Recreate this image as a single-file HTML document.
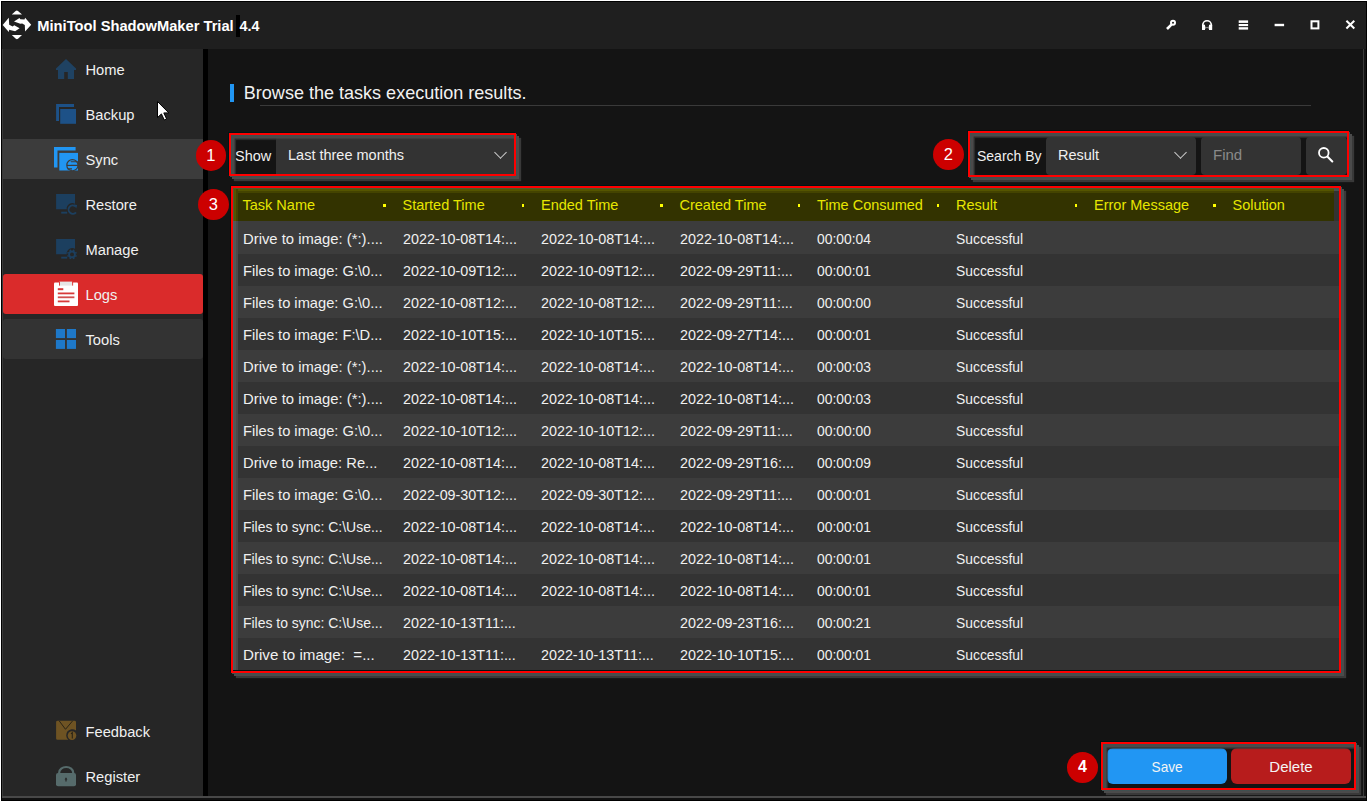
<!DOCTYPE html>
<html><head><meta charset="utf-8">
<style>
*{margin:0;padding:0;box-sizing:border-box}
html,body{width:1368px;height:803px;overflow:hidden;background:#fff;font-family:"Liberation Sans",sans-serif;color:#f0f0f0}
.a{position:absolute}
svg{position:absolute;overflow:visible}
#win{left:1px;top:1px;width:1366px;height:800px;background:#000}
#title{left:2px;top:2px;width:1364px;height:47px;background:#1f1f1f}
#side{left:2px;top:49px;width:201px;height:747px;background:#262626;border-left:1px solid #3a3a3a}
#sep{left:203px;top:49px;width:5px;height:747px;background:#000}
#content{left:208px;top:49px;width:1158px;height:747px;background:#141414}
#rline{left:1363px;top:49px;width:1px;height:747px;background:#3a3a3a}
#bot1{left:2px;top:796px;width:1364px;height:2px;background:#484848}
#bot2{left:2px;top:798px;width:1364px;height:2px;background:#111}
.ttl{left:37.3px;top:16px;font-size:14.7px;font-weight:bold;color:#fff;white-space:nowrap;line-height:20px}
.nav{left:3px;width:200px;height:40px;border-radius:3px}
.navt{left:85.5px;font-size:14.7px;line-height:20px;color:#f0f0f0;white-space:nowrap}
.hdr{left:243.8px;top:82.2px;font-size:18.05px;line-height:22px;color:#f2f2f2;white-space:nowrap}
.badge{width:30.8px;height:30.8px;border-radius:50%;background:#cc0000;color:#fff;font-size:16.5px;line-height:30.8px;text-align:center}
.dot{width:2.5px;height:2.5px;background:#ffff00}
.ann{position:absolute;border:2px solid #f00;box-shadow:-1px -1px 0 0 rgba(0,20,20,.9),1px 1px 0 0 #3f5050,3px 3px 0 0 #4b4b4b,5px 5px 1px 0 #393939}
.inset{position:absolute;pointer-events:none;box-shadow:inset 1px 1px 0 #3f5050,inset 3.6px 3.6px 0 #4a4a4a,inset 5px 5px 1px rgba(56,56,56,.75)}
.dd{position:absolute;background:#333;border-radius:4px}
.chev{position:absolute;width:9px;height:9px;border-right:1.5px solid #cfcfcf;border-bottom:1.5px solid #cfcfcf;transform:rotate(45deg)}
.t{line-height:32px;font-size:14.5px;white-space:nowrap;color:#f0f0f0}
.th{line-height:34px;font-size:14.5px;white-space:nowrap;color:#e6e600}
.btn{position:absolute;border-radius:6px;color:#f4f4f4;font-size:15px;text-align:center;line-height:38px}
</style></head><body>
<div id="win" class="a"></div>
<div id="title" class="a"></div>
<div id="side" class="a"></div>
<div id="sep" class="a"></div>
<div id="content" class="a"></div>
<div id="rline" class="a"></div>
<div id="bot1" class="a"></div>
<div id="bot2" class="a"></div>

<div class="a" style="left:236px;top:15px;width:4px;height:21.6px;background:#000"></div>
<div class="a ttl">MiniTool ShadowMaker Trial</div><div class="a ttl" style="left:239.6px;font-size:14.3px">4.4</div>

<div class="a nav" style="top:139px;background:#3c3c3c;border-radius:0"></div>
<div class="a nav" style="top:274px;background:#da2b2b"></div>
<div class="a nav" style="top:319px;background:#333"></div>
<div class="a navt" style="top:59.5px">Home</div>
<div class="a navt" style="top:104.5px">Backup</div>
<div class="a navt" style="top:149.5px">Sync</div>
<div class="a navt" style="top:194.5px">Restore</div>
<div class="a navt" style="top:239.5px">Manage</div>
<div class="a navt" style="top:284.5px">Logs</div>
<div class="a navt" style="top:329.5px">Tools</div>
<div class="a navt" style="top:721.5px">Feedback</div>
<div class="a navt" style="top:766.5px">Register</div>

<div class="a" style="left:230px;top:84px;width:4px;height:18px;background:#2196f3"></div>
<div class="a hdr">Browse the tasks execution results.</div>
<div class="a" style="left:260px;top:105px;width:1051px;height:1px;background:#3a3a3a"></div>

<!-- box 1 -->
<div class="ann" style="left:229px;top:133px;width:287px;height:43px;background:#141414"></div>
<div class="dd" style="left:276px;top:135px;width:238px;height:39px;border-radius:5px 0 0 0"></div>
<div class="a" style="left:235px;top:141px;font-size:14.5px;line-height:30px;color:#f0f0f0">Show</div>
<div class="a" style="left:288px;top:140px;font-size:14.5px;line-height:30px;color:#f0f0f0">Last three months</div>
<div class="chev" style="left:495.5px;top:147.5px"></div>
<div class="inset" style="left:231px;top:135px;width:283px;height:39px"></div>

<!-- box 2 -->
<div class="ann" style="left:968px;top:131px;width:381px;height:46px;background:#141414"></div>
<div class="dd" style="left:1046px;top:137px;width:150px;height:38px"></div>
<div class="dd" style="left:1201px;top:137px;width:100px;height:38px"></div>
<div class="dd" style="left:1306px;top:137px;width:41px;height:38px"></div>
<div class="a" style="left:977px;top:140.5px;font-size:14px;line-height:30px;color:#f0f0f0">Search By</div>
<div class="a" style="left:1058px;top:140px;font-size:14.5px;line-height:30px;color:#f0f0f0">Result</div>
<div class="chev" style="left:1175.5px;top:148.3px"></div>
<div class="a" style="left:1213px;top:140px;font-size:15px;line-height:30px;color:#8a8a8a">Find</div>
<div class="inset" style="left:970px;top:133px;width:377px;height:42px"></div>

<!-- box 3 -->
<div class="ann" style="left:231px;top:186px;width:1110px;height:487px;background:#001414"></div>
<div class="a" style="left:233px;top:188px;width:1101px;height:33px;background:#333300"></div>
<div class="a" style="left:233px;top:188px;width:1101px;height:5px;background:#444400"></div>
<div class="a" style="left:233px;top:188px;width:1101px;height:3px;background:#555500"></div>
<div class="a" style="left:233px;top:188px;width:5px;height:33px;background:#444400"></div>
<div class="a" style="left:233px;top:188px;width:3px;height:33px;background:#555500"></div>
<div class="a" style="left:1334px;top:188px;width:5px;height:33px;background:#333"></div>
<div class="a" style="left:1334px;top:188px;width:5px;height:3px;background:#4a5050"></div>
<div class="a" style="left:233px;top:221px;width:1106px;height:33px;background:#3c3c3c"></div>
<div class="a" style="left:233px;top:254px;width:1106px;height:32px;background:#333333"></div>
<div class="a" style="left:233px;top:286px;width:1106px;height:32px;background:#3c3c3c"></div>
<div class="a" style="left:233px;top:318px;width:1106px;height:32px;background:#333333"></div>
<div class="a" style="left:233px;top:350px;width:1106px;height:32px;background:#3c3c3c"></div>
<div class="a" style="left:233px;top:382px;width:1106px;height:32px;background:#333333"></div>
<div class="a" style="left:233px;top:414px;width:1106px;height:32px;background:#3c3c3c"></div>
<div class="a" style="left:233px;top:446px;width:1106px;height:32px;background:#333333"></div>
<div class="a" style="left:233px;top:478px;width:1106px;height:32px;background:#3c3c3c"></div>
<div class="a" style="left:233px;top:510px;width:1106px;height:32px;background:#333333"></div>
<div class="a" style="left:233px;top:542px;width:1106px;height:32px;background:#3c3c3c"></div>
<div class="a" style="left:233px;top:574px;width:1106px;height:32px;background:#333333"></div>
<div class="a" style="left:233px;top:606px;width:1106px;height:32px;background:#3c3c3c"></div>
<div class="a" style="left:233px;top:638px;width:1106px;height:32px;background:#333333"></div>
<div class="a t" style="left:242.5px;top:223px;transform:scaleX(1.022);transform-origin:0 0">Drive to image: (*:)....</div>
<div class="a t" style="left:402.5px;top:223px;transform:scaleX(0.988);transform-origin:0 0">2022-10-08T14:...</div>
<div class="a t" style="left:541px;top:223px;transform:scaleX(0.988);transform-origin:0 0">2022-10-08T14:...</div>
<div class="a t" style="left:679.5px;top:223px;transform:scaleX(0.988);transform-origin:0 0">2022-10-08T14:...</div>
<div class="a t" style="left:817px;top:223px;transform:scaleX(0.955);transform-origin:0 0">00:00:04</div>
<div class="a t" style="left:956px;top:223px;transform:scaleX(0.957);transform-origin:0 0">Successful</div>
<div class="a t" style="left:242.5px;top:255px;transform:scaleX(1.012);transform-origin:0 0">Files to image: G:\0...</div>
<div class="a t" style="left:402.5px;top:255px;transform:scaleX(0.988);transform-origin:0 0">2022-10-09T12:...</div>
<div class="a t" style="left:541px;top:255px;transform:scaleX(0.988);transform-origin:0 0">2022-10-09T12:...</div>
<div class="a t" style="left:679.5px;top:255px;transform:scaleX(0.988);transform-origin:0 0">2022-09-29T11:...</div>
<div class="a t" style="left:817px;top:255px;transform:scaleX(0.955);transform-origin:0 0">00:00:01</div>
<div class="a t" style="left:956px;top:255px;transform:scaleX(0.957);transform-origin:0 0">Successful</div>
<div class="a t" style="left:242.5px;top:287px;transform:scaleX(1.012);transform-origin:0 0">Files to image: G:\0...</div>
<div class="a t" style="left:402.5px;top:287px;transform:scaleX(0.988);transform-origin:0 0">2022-10-08T12:...</div>
<div class="a t" style="left:541px;top:287px;transform:scaleX(0.988);transform-origin:0 0">2022-10-08T12:...</div>
<div class="a t" style="left:679.5px;top:287px;transform:scaleX(0.988);transform-origin:0 0">2022-09-29T11:...</div>
<div class="a t" style="left:817px;top:287px;transform:scaleX(0.955);transform-origin:0 0">00:00:00</div>
<div class="a t" style="left:956px;top:287px;transform:scaleX(0.957);transform-origin:0 0">Successful</div>
<div class="a t" style="left:242.5px;top:319px;transform:scaleX(1.012);transform-origin:0 0">Files to image: F:\D...</div>
<div class="a t" style="left:402.5px;top:319px;transform:scaleX(0.988);transform-origin:0 0">2022-10-10T15:...</div>
<div class="a t" style="left:541px;top:319px;transform:scaleX(0.988);transform-origin:0 0">2022-10-10T15:...</div>
<div class="a t" style="left:679.5px;top:319px;transform:scaleX(0.988);transform-origin:0 0">2022-09-27T14:...</div>
<div class="a t" style="left:817px;top:319px;transform:scaleX(0.955);transform-origin:0 0">00:00:01</div>
<div class="a t" style="left:956px;top:319px;transform:scaleX(0.957);transform-origin:0 0">Successful</div>
<div class="a t" style="left:242.5px;top:351px;transform:scaleX(1.022);transform-origin:0 0">Drive to image: (*:)....</div>
<div class="a t" style="left:402.5px;top:351px;transform:scaleX(0.988);transform-origin:0 0">2022-10-08T14:...</div>
<div class="a t" style="left:541px;top:351px;transform:scaleX(0.988);transform-origin:0 0">2022-10-08T14:...</div>
<div class="a t" style="left:679.5px;top:351px;transform:scaleX(0.988);transform-origin:0 0">2022-10-08T14:...</div>
<div class="a t" style="left:817px;top:351px;transform:scaleX(0.955);transform-origin:0 0">00:00:03</div>
<div class="a t" style="left:956px;top:351px;transform:scaleX(0.957);transform-origin:0 0">Successful</div>
<div class="a t" style="left:242.5px;top:383px;transform:scaleX(1.022);transform-origin:0 0">Drive to image: (*:)....</div>
<div class="a t" style="left:402.5px;top:383px;transform:scaleX(0.988);transform-origin:0 0">2022-10-08T14:...</div>
<div class="a t" style="left:541px;top:383px;transform:scaleX(0.988);transform-origin:0 0">2022-10-08T14:...</div>
<div class="a t" style="left:679.5px;top:383px;transform:scaleX(0.988);transform-origin:0 0">2022-10-08T14:...</div>
<div class="a t" style="left:817px;top:383px;transform:scaleX(0.955);transform-origin:0 0">00:00:03</div>
<div class="a t" style="left:956px;top:383px;transform:scaleX(0.957);transform-origin:0 0">Successful</div>
<div class="a t" style="left:242.5px;top:415px;transform:scaleX(1.012);transform-origin:0 0">Files to image: G:\0...</div>
<div class="a t" style="left:402.5px;top:415px;transform:scaleX(0.988);transform-origin:0 0">2022-10-10T12:...</div>
<div class="a t" style="left:541px;top:415px;transform:scaleX(0.988);transform-origin:0 0">2022-10-10T12:...</div>
<div class="a t" style="left:679.5px;top:415px;transform:scaleX(0.988);transform-origin:0 0">2022-09-29T11:...</div>
<div class="a t" style="left:817px;top:415px;transform:scaleX(0.955);transform-origin:0 0">00:00:00</div>
<div class="a t" style="left:956px;top:415px;transform:scaleX(0.957);transform-origin:0 0">Successful</div>
<div class="a t" style="left:242.5px;top:447px;transform:scaleX(1.017);transform-origin:0 0">Drive to image: Re...</div>
<div class="a t" style="left:402.5px;top:447px;transform:scaleX(0.988);transform-origin:0 0">2022-10-08T14:...</div>
<div class="a t" style="left:541px;top:447px;transform:scaleX(0.988);transform-origin:0 0">2022-10-08T14:...</div>
<div class="a t" style="left:679.5px;top:447px;transform:scaleX(0.988);transform-origin:0 0">2022-09-29T16:...</div>
<div class="a t" style="left:817px;top:447px;transform:scaleX(0.955);transform-origin:0 0">00:00:09</div>
<div class="a t" style="left:956px;top:447px;transform:scaleX(0.957);transform-origin:0 0">Successful</div>
<div class="a t" style="left:242.5px;top:479px;transform:scaleX(1.012);transform-origin:0 0">Files to image: G:\0...</div>
<div class="a t" style="left:402.5px;top:479px;transform:scaleX(0.988);transform-origin:0 0">2022-09-30T12:...</div>
<div class="a t" style="left:541px;top:479px;transform:scaleX(0.988);transform-origin:0 0">2022-09-30T12:...</div>
<div class="a t" style="left:679.5px;top:479px;transform:scaleX(0.988);transform-origin:0 0">2022-09-29T11:...</div>
<div class="a t" style="left:817px;top:479px;transform:scaleX(0.955);transform-origin:0 0">00:00:01</div>
<div class="a t" style="left:956px;top:479px;transform:scaleX(0.957);transform-origin:0 0">Successful</div>
<div class="a t" style="left:242.5px;top:511px;transform:scaleX(0.962);transform-origin:0 0">Files to sync: C:\Use...</div>
<div class="a t" style="left:402.5px;top:511px;transform:scaleX(0.988);transform-origin:0 0">2022-10-08T14:...</div>
<div class="a t" style="left:541px;top:511px;transform:scaleX(0.988);transform-origin:0 0">2022-10-08T14:...</div>
<div class="a t" style="left:679.5px;top:511px;transform:scaleX(0.988);transform-origin:0 0">2022-10-08T14:...</div>
<div class="a t" style="left:817px;top:511px;transform:scaleX(0.955);transform-origin:0 0">00:00:01</div>
<div class="a t" style="left:956px;top:511px;transform:scaleX(0.957);transform-origin:0 0">Successful</div>
<div class="a t" style="left:242.5px;top:543px;transform:scaleX(0.962);transform-origin:0 0">Files to sync: C:\Use...</div>
<div class="a t" style="left:402.5px;top:543px;transform:scaleX(0.988);transform-origin:0 0">2022-10-08T14:...</div>
<div class="a t" style="left:541px;top:543px;transform:scaleX(0.988);transform-origin:0 0">2022-10-08T14:...</div>
<div class="a t" style="left:679.5px;top:543px;transform:scaleX(0.988);transform-origin:0 0">2022-10-08T14:...</div>
<div class="a t" style="left:817px;top:543px;transform:scaleX(0.955);transform-origin:0 0">00:00:01</div>
<div class="a t" style="left:956px;top:543px;transform:scaleX(0.957);transform-origin:0 0">Successful</div>
<div class="a t" style="left:242.5px;top:575px;transform:scaleX(0.962);transform-origin:0 0">Files to sync: C:\Use...</div>
<div class="a t" style="left:402.5px;top:575px;transform:scaleX(0.988);transform-origin:0 0">2022-10-08T14:...</div>
<div class="a t" style="left:541px;top:575px;transform:scaleX(0.988);transform-origin:0 0">2022-10-08T14:...</div>
<div class="a t" style="left:679.5px;top:575px;transform:scaleX(0.988);transform-origin:0 0">2022-10-08T14:...</div>
<div class="a t" style="left:817px;top:575px;transform:scaleX(0.955);transform-origin:0 0">00:00:01</div>
<div class="a t" style="left:956px;top:575px;transform:scaleX(0.957);transform-origin:0 0">Successful</div>
<div class="a t" style="left:242.5px;top:607px;transform:scaleX(0.962);transform-origin:0 0">Files to sync: C:\Use...</div>
<div class="a t" style="left:402.5px;top:607px;transform:scaleX(0.988);transform-origin:0 0">2022-10-13T11:...</div>
<div class="a t" style="left:679.5px;top:607px;transform:scaleX(0.988);transform-origin:0 0">2022-09-23T16:...</div>
<div class="a t" style="left:817px;top:607px;transform:scaleX(0.955);transform-origin:0 0">00:00:21</div>
<div class="a t" style="left:956px;top:607px;transform:scaleX(0.957);transform-origin:0 0">Successful</div>
<div class="a t" style="left:242.5px;top:639px;transform:scaleX(1.045);transform-origin:0 0">Drive to image: &nbsp;=...</div>
<div class="a t" style="left:402.5px;top:639px;transform:scaleX(0.988);transform-origin:0 0">2022-10-13T11:...</div>
<div class="a t" style="left:541px;top:639px;transform:scaleX(0.988);transform-origin:0 0">2022-10-13T11:...</div>
<div class="a t" style="left:679.5px;top:639px;transform:scaleX(0.988);transform-origin:0 0">2022-10-10T15:...</div>
<div class="a t" style="left:817px;top:639px;transform:scaleX(0.955);transform-origin:0 0">00:00:01</div>
<div class="a t" style="left:956px;top:639px;transform:scaleX(0.957);transform-origin:0 0">Successful</div>
<div class="a th" style="left:242.5px;top:188px">Task Name</div>
<div class="a th" style="left:402.5px;top:188px">Started Time</div>
<div class="a th" style="left:541px;top:188px">Ended Time</div>
<div class="a th" style="left:679.5px;top:188px">Created Time</div>
<div class="a th" style="left:817px;top:188px">Time Consumed</div>
<div class="a th" style="left:956px;top:188px">Result</div>
<div class="a th" style="left:1094px;top:188px">Error Message</div>
<div class="a th" style="left:1232.5px;top:188px">Solution</div>
<div class="a dot" style="left:383.0px;top:204px"></div>
<div class="a dot" style="left:521.5px;top:204px"></div>
<div class="a dot" style="left:660.0px;top:204px"></div>
<div class="a dot" style="left:797.5px;top:204px"></div>
<div class="a dot" style="left:936.5px;top:204px"></div>
<div class="a dot" style="left:1074.5px;top:204px"></div>
<div class="a dot" style="left:1213.0px;top:204px"></div>
<div class="a" style="left:233px;top:221px;width:5px;height:449px;background:#4a4a4a"></div>
<div class="a" style="left:233px;top:221px;width:3px;height:449px;background:#555"></div>
<div class="a" style="left:233px;top:221px;width:1px;height:449px;background:#4f5f5f"></div>
<div class="a" style="left:233px;top:188px;width:1px;height:33px;background:#4a5a30"></div>
<div class="a" style="left:233px;top:188px;width:1101px;height:1px;background:#4a5a30"></div>

<!-- box 4 -->
<div class="ann" style="left:1101px;top:742px;width:255px;height:48px;background:#141414"></div>
<div class="btn" style="left:1107px;top:748px;width:120px;height:36px;background:#2196f3"><span style="display:inline-block;transform:scaleX(0.91)">Save</span></div>
<div class="btn" style="left:1231px;top:748px;width:120px;height:36px;background:#b71c1c">Delete</div>
<div class="inset" style="left:1103px;top:744px;width:251px;height:44px"></div>

<div class="a badge" style="left:195.5px;top:140px">1</div>
<div class="a badge" style="left:933px;top:139px">2</div>
<div class="a badge" style="left:198px;top:189px">3</div>
<div class="a badge" style="left:1067px;top:752px;font-weight:bold;font-size:16px">4</div>

<!-- logo -->
<svg class="a" style="left:0;top:0" width="40" height="48" viewBox="0 0 40 48">
 <g fill="#fff">
  <path d="M11.8,14.6 L15.6,10.9 Q16.8,10 18,10.9 L22,14.6 Z"/>
  <path d="M11.8,35 L22,35 L18,38.7 Q16.9,39.6 15.8,38.7 Z"/>
  <path d="M2.7,25 L8.8,17.8 L9.2,24.7 L12.7,26.4 L14.2,25.2 L19.6,28.2 L15.1,31.3 L11,30.3 L9.2,29.8 L8.8,32 Z"/>
  <path d="M31.2,24.7 L25.1,17.8 L24.5,19.6 L20.3,19.2 L19.5,18.1 L14,21.5 L20.3,23.8 L22.2,23.4 L24.8,25 L25.1,31.5 Z"/>
 </g>
</svg>
<!-- titlebar right icons -->
<svg class="a" style="left:0;top:0" width="1368" height="48">
 <g stroke="#fff" fill="none">
  <circle cx="1173" cy="22.7" r="2" stroke-width="2"/>
  <path d="M1171.4,24.6 L1167,29" stroke-width="2.6"/>
  <path d="M1202.8,25.5 L1202.8,25 A4.25,4.25 0 0 1 1211.3,25 L1211.3,25.5" stroke-width="1.7"/>
 </g>
 <g fill="#fff">
  <path d="M1202,24.7 L1205,24.7 L1205,30 L1202.6,30 Q1202,30 1202,29.4 Z"/>
  <path d="M1209,24.7 L1212.2,24.7 L1212.2,29.4 Q1212.2,30 1211.6,30 L1209,30 Z"/>
  <path d="M1205.2,26.2 L1207,27.6 L1208.7,26.2 L1208.7,29 L1207,27.6 L1205.2,29 Z" fill="#aaa"/>
  <rect x="1238.7" y="20.4" width="9.4" height="2.5"/>
  <rect x="1238.7" y="24" width="9.4" height="2.1"/>
  <rect x="1238.7" y="27.2" width="9.4" height="2.4"/>
  <rect x="1274.6" y="23.8" width="9.5" height="2.4"/>
 </g>
 <g stroke="#fff" fill="none" stroke-width="2">
  <rect x="1311.5" y="21.3" width="6.9" height="7.1"/>
  <path d="M1346.4,20.7 L1354.3,28.5 M1354.3,20.7 L1346.4,28.5"/>
 </g>
</svg>

<!-- sidebar icons -->
<svg class="a" style="left:0;top:0" width="210" height="803">
 <path fill="#1f4262" d="M56,68.6 L66,59 L76,68.6 L76,70 L74,70 L74,79 L67.8,79 L67.8,72 L64.2,72 L64.2,79 L58,79 L58,70 L56,70 Z"/>
 <g fill="#1d5187">
  <path d="M56.1,104.1 L74,104.1 L74,107 L59,107 L59,121.1 L56.1,121.1 Z"/>
  <rect x="60.2" y="109" width="15.8" height="14.8"/>
 </g>
 <g fill="#2196f3">
  <path d="M54,147 L75.6,147 L75.6,150.5 L57.5,150.5 L57.5,167.5 L54,167.5 Z"/>
  <rect x="59.3" y="152.9" width="18.7" height="17.6"/>
  <circle cx="72.4" cy="165.2" r="5.6" stroke="#3c3c3c" stroke-width="1.2"/>
  <path d="M70.6,161.7 L78.2,161.7 M67,165.4 L78.2,165.4 M67.6,168.9 L72,168.9" stroke="#3c3c3c" stroke-width="1.1" fill="none"/>
  <path d="M68,164.6 L70.6,161.2 L70.6,164.6 Z" fill="#2196f3"/>
 </g>
 <g fill="#1c3f5f">
  <path d="M56.1,193.9 L75,193.9 L75,203.8 A5.6,5.6 0 0 0 66.7,209.2 L56.1,209.2 Z"/>
  <rect x="61.2" y="211.7" width="6" height="1.9"/>
  <path d="M75.4,206.3 A4.2,4.2 0 1 0 76,212.3" fill="none" stroke="#1c3f5f" stroke-width="1.9"/>
  <path d="M73.8,204.5 L77.2,205 L76.2,208.4 Z"/>
 </g>
 <g fill="#1c3f5f">
  <path d="M56.1,238.9 L75,238.9 L75,248.8 A5.6,5.6 0 0 0 66.7,254.2 L56.1,254.2 Z"/>
  <rect x="61.2" y="256.7" width="6" height="1.9"/>
  <circle cx="72" cy="254.4" r="2.9" fill="none" stroke="#1c3f5f" stroke-width="1.9"/>
  <path d="M75.33,255.78 L76.62,256.31 M73.38,257.73 L73.91,259.02 M70.62,257.73 L70.09,259.02 M68.67,255.78 L67.38,256.31 M68.67,253.02 L67.38,252.49 M70.62,251.07 L70.09,249.78 M73.38,251.07 L73.91,249.78 M75.33,253.02 L76.62,252.49" stroke="#1c3f5f" stroke-width="1.7"/>
 </g>
 <g>
  <rect x="54" y="282.5" width="24" height="23.5" rx="1" fill="#fff"/>
  <rect x="59.5" y="281.6" width="12.7" height="4" fill="#e6e6e6"/>
  <rect x="59.1" y="282" width="0.9" height="3.6" fill="#d92b2b"/>
  <rect x="72.2" y="282" width="0.9" height="3.6" fill="#d92b2b"/>
  <rect x="57.8" y="288.2" width="5.5" height="2" fill="#d83a3a"/>
  <rect x="57.8" y="292.5" width="16.6" height="1.8" fill="#d83a3a"/>
  <rect x="57.8" y="296.4" width="16.6" height="1.8" fill="#d05050"/>
  <rect x="57.8" y="300.5" width="11.7" height="1.8" fill="#d83a3a"/>
 </g>
 <g fill="#1e78c8">
  <rect x="55.9" y="329" width="9.1" height="9.1"/>
  <rect x="66.9" y="329" width="9.1" height="9.1"/>
  <rect x="55.9" y="340" width="9.1" height="8.9"/>
  <rect x="66.9" y="340" width="9.1" height="8.9"/>
 </g>
 <g>
  <path fill="#6e5323" d="M57.5,720.8 L74.6,720.8 Q76,720.8 76,722.2 L76,730.6 A5.4,5.4 0 0 0 68.3,739.8 L57.5,739.8 Q56.1,739.8 56.1,738.4 L56.1,722.2 Q56.1,720.8 57.5,720.8 Z"/>
  <path d="M59.3,721 L65.5,729.3 L72.5,721" fill="none" stroke="#2a2416" stroke-width="1"/>
  <circle cx="72" cy="735.6" r="4.3" fill="#6e5323"/>
  <path d="M71,733.8 L72.3,732.6 L72.3,738.4" fill="none" stroke="#2a2416" stroke-width="1.1"/>
 </g>
 <g fill="#566b6b">
  <path d="M59.2,774 L59.2,772.5 A7,5.5 0 0 1 73.2,772.5 L73.2,774" fill="none" stroke="#566b6b" stroke-width="2.2"/>
  <rect x="56" y="773" width="20" height="13.2" rx="2"/>
  <path d="M66,777.2 L64.6,779.4 L65.4,779.4 L65.4,781.6 L66.6,781.6 L66.6,779.4 L67.4,779.4 Z" fill="#252525"/>
 </g>
 <!-- cursor -->
 <path d="M157.5,101.5 L157.5,117.6 L161.4,113.9 L164.3,120 L166.6,118.9 L163.8,112.9 L168.8,112.9 Z" fill="#fff" stroke="#000" stroke-width="1" stroke-linejoin="miter"/>
</svg>

<!-- search icon -->
<svg class="a" style="left:0;top:0" width="1368" height="200">
 <circle cx="1323.8" cy="152.8" r="4.8" fill="none" stroke="#fff" stroke-width="1.8"/>
 <path d="M1327.6,156.8 L1332.3,161.4" stroke="#fff" stroke-width="2.1" stroke-linecap="round"/>
</svg>

</body></html>
